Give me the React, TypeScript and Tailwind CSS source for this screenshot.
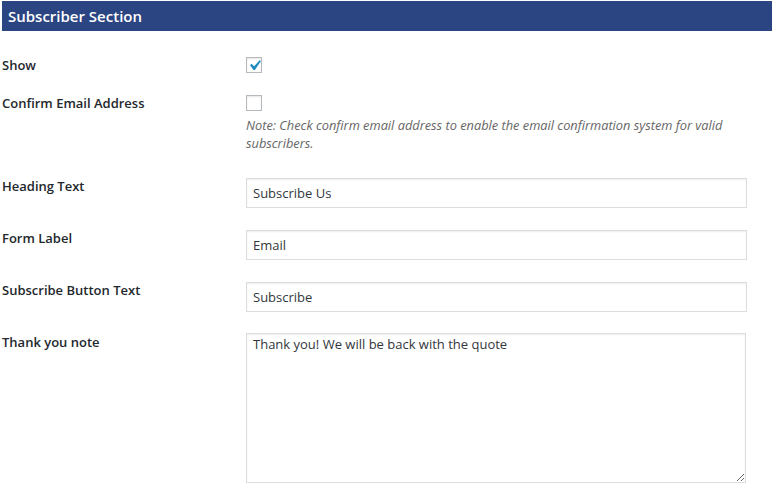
import { useState } from "react"

function Checkbox({ checked }: { checked: boolean }) {
    return (
        <div className="w-4 h-4 border border-[#b4b9be] bg-white shadow-[inset_0_1px_2px_rgba(0,0,0,0.1)] flex items-center justify-center">
            {checked && (
                <svg viewBox="0 0 20 20" className="w-[21px] h-[21px] shrink-0" fill="#1e8cbe">
                    <path d="M14.83 4.89l1.34.94-5.81 8.38H9.02L5.78 9.67l1.34-1.25 2.57 2.4z" />
                </svg>
            )}
        </div>
    )
}

const inputCls =
    "block w-[501px] h-[30px] border border-[#ddd] bg-white shadow-[inset_0_1px_2px_rgba(0,0,0,0.07)] px-[6px] text-[13px] text-[#32373c] outline-none font-['Open_Sans',sans-serif]"

function Label({ children }: { children: React.ReactNode }) {
    return <div className="w-[246px] pl-[2px] shrink-0 font-semibold leading-[18px] text-[#23282d]">{children}</div>
}

export default function App() {
    const [heading, setHeading] = useState("Subscribe Us")
    const [formLabel, setFormLabel] = useState("Email")
    const [buttonText, setButtonText] = useState("Subscribe")
    const [note, setNote] = useState("Thank you! We will be back with the quote")

    return (
        <div className="w-[772px] h-[499px] bg-white font-['Open_Sans',sans-serif] text-[13px] text-[#23282d] overflow-hidden">
            <div className="ml-[2px] mt-[1px] h-[30px] bg-[#2b4582] text-white font-semibold text-[15px] pl-[6px] flex items-center">
                Subscriber Section
            </div>

            <div className="flex flex-col">
                <div className="flex mt-[25px]">
                    <Label>Show</Label>
                    <div className="mt-[1px]">
                        <Checkbox checked />
                    </div>
                </div>

                <div className="flex mt-[20px]">
                    <Label>Confirm Email Address</Label>
                    <div className="w-[501px]">
                        <div className="mt-[1px]">
                            <Checkbox checked={false} />
                        </div>
                        <p className="mt-[5px] italic text-[#666] leading-[18px] text-[12.8px]">
                            Note: Check confirm email address to enable the email confirmation system for valid subscribers.
                        </p>
                    </div>
                </div>

                <div className="flex items-start mt-[26px]">
                    <div className="-mt-[1px]"><Label>Heading Text</Label></div>
                    <input className={inputCls} value={heading} onChange={(e) => setHeading(e.target.value)} />
                </div>

                <div className="flex items-start mt-[22px]">
                    <div className="-mt-[1px]"><Label>Form Label</Label></div>
                    <input className={inputCls} value={formLabel} onChange={(e) => setFormLabel(e.target.value)} />
                </div>

                <div className="flex items-start mt-[22px]">
                    <div className="-mt-[1px]"><Label>Subscribe Button Text</Label></div>
                    <input className={inputCls} value={buttonText} onChange={(e) => setButtonText(e.target.value)} />
                </div>

                <div className="flex items-start mt-[21px]">
                    <Label>Thank you note</Label>
                    <textarea
                        className="block w-[500px] h-[150px] border border-[#ddd] bg-white shadow-[inset_0_1px_2px_rgba(0,0,0,0.07)] px-[6px] py-[1px] leading-[18px] text-[13px] text-[#32373c] outline-none resize-y font-['Open_Sans',sans-serif]"
                        value={note}
                        onChange={(e) => setNote(e.target.value)}
                    />
                </div>
            </div>
        </div>
    )
}
